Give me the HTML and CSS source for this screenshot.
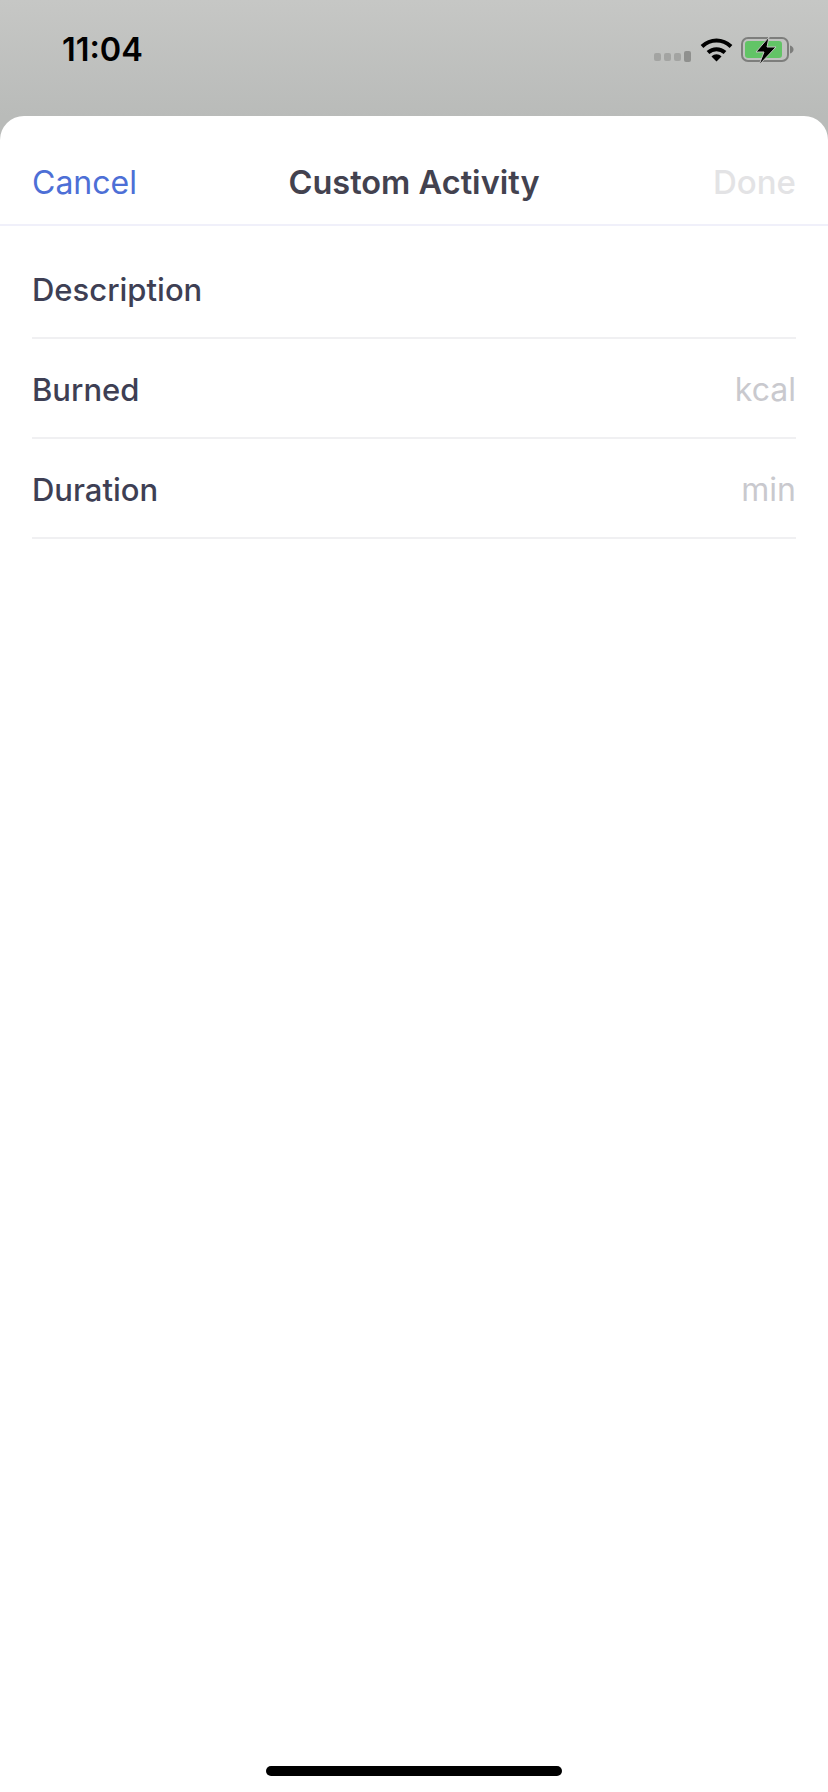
FILE: index.html
```html
<!DOCTYPE html>
<html>
<head>
    <title>Custom Activity</title>
    <link rel="stylesheet" href="styles.css">
</head>
<body>
    <div class="status-bar">
        <span class="clock">11:04</span>
        <div class="status-icons">
            <svg class="signal" width="38" height="12" viewBox="0 0 38 12">
                <rect x="0" y="2" width="7" height="8" rx="2" fill="#a3a4a2"/>
                <rect x="10" y="2" width="7" height="8" rx="2" fill="#a3a4a2"/>
                <rect x="20" y="2" width="7" height="8" rx="2" fill="#a3a4a2"/>
                <rect x="30" y="0" width="7" height="11" rx="2" fill="#8f908e"/>
            </svg>
            <svg class="wifi" width="33" height="25" viewBox="0 0 33 25">
                <path d="M2 9.500C10.500 1.500 22.500 1.500 31 9.500" fill="none" stroke="#000" stroke-width="4"/>
                <path d="M8 15.500C13 11 20 11 25 15.500" fill="none" stroke="#000" stroke-width="4"/>
                <path d="M11.500 19.500C14.500 16.500 18.500 16.500 21.500 19.500L16.500 24.500Z" fill="#000"/>
            </svg>
            <svg class="battery" width="53" height="28" viewBox="0 0 53 28">
                <rect x="1" y="1" width="46" height="23" rx="6" fill="none" stroke="#7d7e7c" stroke-width="2"/>
                <rect x="4" y="4" width="37" height="17" rx="3" fill="#62c466"/>
                <path d="M49 8.500C51 9 52.500 10.500 52.500 12.500C52.500 14.500 51 16 49 16.500Z" fill="#7d7e7c"/>
                <path d="M28 0L15 15H23L18 28L35 10H26Z" fill="#000" stroke="#c3c4c2" stroke-width="1"/>
            </svg>
        </div>
    </div>

    <div class="sheet">
        <div class="sheet-header">
            <span class="btn-cancel">Cancel</span>
            <span class="sheet-title">Custom Activity</span>
            <span class="btn-done">Done</span>
        </div>
        <div class="form-list">
            <div class="form-row first">
                <span class="row-label">Description</span>
            </div>
            <div class="form-row">
                <span class="row-label">Burned</span>
                <span class="row-unit">kcal</span>
            </div>
            <div class="form-row">
                <span class="row-label">Duration</span>
                <span class="row-unit">min</span>
            </div>
        </div>
        <div class="home-area">
            <div class="home-bar"></div>
        </div>
    </div>
</body>
</html>
```

FILE: styles.css
```css
html, body {
    height: 100%;
}

body {
    margin: 0;
    display: flex;
    flex-direction: column;
    font-family: Inter, "Liberation Sans", sans-serif;
    background: #b9bbb9;
    overflow: hidden;
}

.status-bar {
    height: 116px;
    flex-shrink: 0;
    display: flex;
    justify-content: space-between;
    align-items: flex-start;
    padding: 31px 34px 0 62px;
    box-sizing: border-box;
    background: linear-gradient(#c6c7c5, #b9bbb9);
}

.clock {
    font-size: 32.500px;
    font-weight: 600;
    line-height: 38px;
    color: #000;
}

.status-icons {
    display: flex;
    align-items: flex-start;
    gap: 8px;
    padding-top: 6px;
}

.signal {
    margin-top: 14px;
}

.sheet {
    flex: 1;
    display: flex;
    flex-direction: column;
    background: #fff;
    border-radius: 24px 24px 0 0;
}

.sheet-header {
    height: 84px;
    flex-shrink: 0;
    display: grid;
    grid-template-columns: 1fr auto 1fr;
    align-items: center;
    padding: 24px 32px 0;
    border-bottom: 2px solid #f0f0fa;
    font-size: 32px;
}

.btn-cancel {
    color: #4d6fd6;
}

.sheet-title {
    font-size: 32.500px;
    font-weight: 600;
    color: #43424f;
}

.btn-done {
    justify-self: end;
    font-size: 33px;
    font-weight: 500;
    color: #e3e3e5;
}

.form-list {
    flex: 1;
    padding: 0 32px;
}

.form-row {
    height: 96px;
    padding-top: 2px;
    display: flex;
    justify-content: space-between;
    align-items: center;
    border-bottom: 2px solid #f0f0f2;
}

.form-row.first {
    height: 96px;
    padding-top: 15px;
}

.row-label {
    font-size: 31px;
    font-weight: 500;
    color: #3e3f54;
}

.row-unit {
    font-size: 32px;
    color: #c9c9ce;
}

.home-area {
    height: 26px;
    flex-shrink: 0;
    display: flex;
    justify-content: center;
}

.home-bar {
    width: 296px;
    height: 10px;
    border-radius: 5px;
    background: #000;
}
```
